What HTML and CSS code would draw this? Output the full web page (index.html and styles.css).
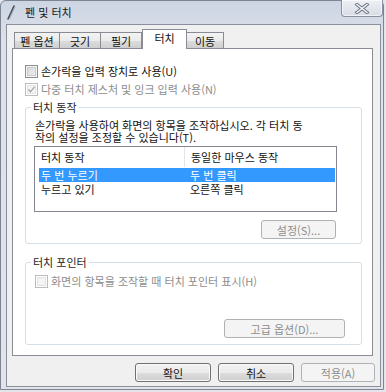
FILE: index.html
```html
<!DOCTYPE html>
<html lang="ko">
<head>
<meta charset="utf-8">
<title>펜 및 터치</title>
<link rel="stylesheet" href="styles.css">
</head>
<body>
<div class="window">
  <div class="titlebar">
    <svg class="pen" width="10" height="16" viewBox="0 0 10 16">
      <line x1="2" y1="15" x2="8" y2="2" stroke="#4a4f58" stroke-width="1.6" stroke-linecap="round"/>
      <line x1="3.5" y1="15" x2="9" y2="3" stroke="#9aa3b0" stroke-width="0.8"/>
    </svg>
    <span class="title">펜 및 터치</span>
    <div class="close">
      <svg width="16" height="11" viewBox="0 0 16 11">
        <path d="M3 1.5 L13 9.5 M13 1.5 L3 9.5" stroke="#6b7280" stroke-width="3.4" stroke-linecap="square"/>
        <path d="M3 1.5 L13 9.5 M13 1.5 L3 9.5" stroke="#f4f5f8" stroke-width="1.6" stroke-linecap="square"/>
      </svg>
    </div>
  </div>
  <div class="client">
    <div class="tabs">
      <div class="tab t1">펜 옵션</div>
      <div class="tab t2">긋기</div>
      <div class="tab t3">필기</div>
      <div class="tab active">터치</div>
      <div class="tab t5">이동</div>
    </div>
    <div class="panel">
      <div class="check first"><span class="box"></span><span>손가락을 입력 장치로 사용(U)</span></div>
      <div class="check second disabled"><span class="box dis"><svg width="9" height="9" viewBox="0 0 9 9"><path d="M1.5 4.5 L3.5 6.8 L7.5 1.8" fill="none" stroke="#a3a3a3" stroke-width="1.3"/></svg></span><span>다중 터치 제스처 및 잉크 입력 사용(N)</span></div>
      <fieldset class="group g1">
        <legend>터치 동작</legend>
        <p class="desc">손가락을 사용하여 화면의 항목을 조작하십시오. 각 터치 동<br>작의 설정을 조정할 수 있습니다(T).</p>
        <div class="list">
          <div class="row head"><span class="c1">터치 동작</span><span class="c2 sep">동일한 마우스 동작</span></div>
          <div class="row sel"><span class="c1">두 번 누르기</span><span class="c2">두 번 클릭</span></div>
          <div class="row r2"><span class="c1">누르고 있기</span><span class="c2">오른쪽 클릭</span></div>
        </div>
        <div class="btnrow"><div class="btn disabled b-set">설정(S)...</div></div>
      </fieldset>
      <fieldset class="group g2">
        <legend>터치 포인터</legend>
        <div class="check third disabled"><span class="box dis"></span><span>화면의 항목을 조작할 때 터치 포인터 표시(H)</span></div>
        <div class="btnrow"><div class="btn disabled b-adv">고급 옵션(D)...</div></div>
      </fieldset>
    </div>
    <div class="footer">
      <div class="btn b-ok">확인</div>
      <div class="btn b-ok">취소</div>
      <div class="btn disabled b-apply">적용(A)</div>
    </div>
  </div>
</div>
</body>
</html>
```

FILE: styles.css
```css
* { box-sizing: border-box; }
html, body { margin: 0; padding: 0; }
body {
  width: 386px;
  height: 392px;
  overflow: hidden;
  background: #e4e4ea;
  font-family: "Noto Sans CJK KR", "Noto Sans", sans-serif;
  font-size: 11px;
  color: #111;
}
.window {
  width: 384px;
  height: 390px;
  border: 1px solid #7d8592;
  border-radius: 6px 6px 0 0;
  background: linear-gradient(180deg, #cdd5e3 0px, #dde1ea 40px, #e3e3ea 100%);
  display: flex;
  flex-direction: column;
}
.titlebar {
  height: 23px;
  display: flex;
  align-items: flex-start;
}
.pen { margin: 3px 0 0 5px; }
.title {
  margin-left: 9px;
  line-height: 22px;
  font-size: 11px;
  color: #1a1a1a;
}
.close {
  margin-left: auto;
  width: 42px;
  height: 17px;
  margin-top: -1px;
  border: 1px solid #8990a0;
  border-top: none;
  border-radius: 0 0 4px 4px;
  background: linear-gradient(180deg, #eef0f5, #d8dce5);
  box-shadow: inset 0 0 0 1px rgba(255,255,255,0.6);
  display: flex;
  align-items: center;
  justify-content: center;
}
.client {
  margin: 0 2px 2px 5px;
  width: 375px;
  height: 363px;
  border: 1px solid #8a909b;
  background: #f0f0f0;
  padding: 4px 5px 0 5px;
  display: flex;
  flex-direction: column;
}
.tabs {
  height: 20px;
  display: flex;
  align-items: flex-end;
  padding-left: 2px;
  position: relative;
  z-index: 1;
}
.tab {
  height: 16px;
  margin-bottom: 1px;
  border: 1px solid #898c95;
  border-bottom: none;
  background: linear-gradient(180deg, #f3f3f3 0%, #ebebeb 50%, #dddddd 51%, #cfcfcf 100%);
  display: flex;
  align-items: center;
  justify-content: center;
  line-height: 12px;
  color: #111;
}
.t1 { width: 46px; }
.t2 { width: 42px; margin-left: -1px; }
.t3 { width: 42px; margin-left: -1px; }
.t5 { width: 38px; margin-left: -1px; }
.tab.active {
  width: 45px;
  height: 20px;
  margin-bottom: 0;
  background: #ffffff;
  padding-bottom: 3px;
  position: relative;
  z-index: 2;
}
.panel {
  margin-top: -1px;
  width: 361px;
  height: 308px;
  border: 1px solid #898c95;
  background: #ffffff;
  padding: 16px 10px 0 12px;
  display: flex;
  flex-direction: column;
}
.check {
  display: flex;
  align-items: center;
  height: 13px;
  line-height: 13px;
  white-space: nowrap;
}
.check .box {
  width: 13px;
  height: 13px;
  flex: none;
  margin-right: 3px;
  border: 1px solid #8e8f8f;
  background: linear-gradient(135deg, #d0d2d6, #f4f4f6);
  box-shadow: inset 0 0 0 1px #f4f4f4, inset 0 0 0 2px #c9cbcf;
  display: flex;
  align-items: center;
  justify-content: center;
}
.check .box.dis {
  border-color: #bcbcbc;
  background: #f4f4f4;
  box-shadow: inset 0 0 0 1px #ffffff, inset 0 0 0 2px #e3e3e3;
}
.disabled { color: #8d8d8d; }
.second { margin-top: 5px; }
.group {
  margin: 0;
  border: 1px solid #d5dfe5;
  border-radius: 3px;
  min-width: 0;
}
.group legend {
  padding: 0 2px;
  margin-left: -3px;
  line-height: 12px;
  color: #1e1e1e;
}
.g1 {
  margin-top: 5px;
  padding: 0 24px 4px 8px;
}
.desc {
  margin: 6px 0 0 1px;
  line-height: 12px;
  white-space: nowrap;
}
.list {
  margin-top: 3px;
  height: 66px;
  border: 1px solid #828790;
  background: #ffffff;
  display: flex;
  flex-direction: column;
}
.row {
  display: flex;
  align-items: center;
  white-space: nowrap;
}
.row .c1 { width: 145px; padding-left: 2px; }
.row .c2 { padding-left: 6px; }
.head { height: 20px; }
.head .c1 { padding-left: 6px; width: 149px; }
.head .sep {
  border-left: 1px solid #e3e5e8;
  height: 20px;
  line-height: 20px;
}
.sel {
  height: 14px;
  margin: 1px 1px 0 4px;
  background: #3399ff;
  color: #ffffff;
}
.r2 { height: 13px; margin-left: 4px; }
.btnrow {
  display: flex;
  justify-content: flex-end;
}
.btn {
  height: 19px;
  border: 1px solid #707070;
  border-radius: 3px;
  background: linear-gradient(180deg, #f2f2f2 0%, #ebebeb 50%, #dddddd 51%, #cfcfcf 100%);
  box-shadow: inset 0 0 0 1px #fafafa;
  display: flex;
  align-items: center;
  justify-content: center;
  line-height: 12px;
  color: #111;
}
.btn.disabled {
  border-color: #adb2b5;
  background: #f4f4f4;
  box-shadow: none;
  color: #8d8d8d;
}
.b-set { width: 75px; margin: 8px 1px 0 0; }
.g2 {
  margin-top: 12px;
  padding: 0 16px 6px 8px;
}
.third { margin-top: 7px; margin-left: 1px; }
.b-adv { width: 121px; margin-top: 31px; }
.footer {
  margin-top: 7px;
  display: flex;
  justify-content: flex-end;
  gap: 7px;
}
.b-ok { width: 76px; }
.b-apply { width: 74px; }
```
